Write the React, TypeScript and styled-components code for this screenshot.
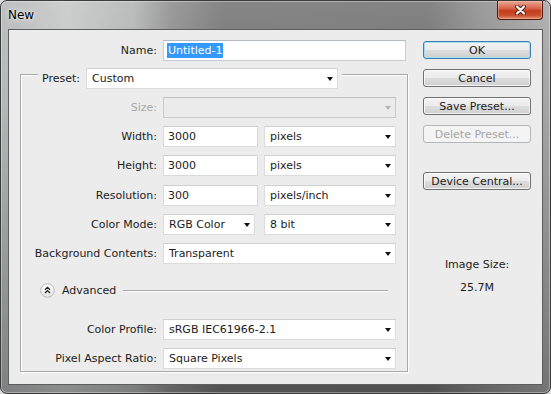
import React from "react";
import styled, { createGlobalStyle, css } from "styled-components";

const GlobalStyle = createGlobalStyle`
  html, body {
    margin: 0;
    padding: 0;
    background: #dcdcdc;
  }
  body {
    font-family: "DejaVu Sans", Tahoma, sans-serif;
    font-size: 11px;
    color: #1c1c1c;
  }
`;

const panelBg = "#ececec";

const Window = styled.div`
  box-sizing: border-box;
  width: 551px;
  height: 394px;
  display: flex;
  flex-direction: column;
  padding: 0 7px 8px;
  border: 1px solid #3a3a3a;
  border-radius: 7px;
  background:
    linear-gradient(180deg, rgba(255, 255, 255, 0.12) 0%, rgba(0, 0, 0, 0) 25%, rgba(0, 0, 0, 0.3) 100%),
    linear-gradient(90deg, #b4b7b8 0%, #c6c7c7 12%, #b3b4b4 24%, #8e8e8e 31%, #767676 40%, #737373 78%, #8b8b8b 86%, #a8a8a8 100%);
  box-shadow: inset 0 0 0 1px rgba(255, 255, 255, 0.35);
`;

const TitleBar = styled.div`
  height: 28px;
  flex: none;
  display: flex;
  justify-content: space-between;
  align-items: flex-start;
`;

const Title = styled.div`
  padding-top: 6px;
  font-size: 12px;
  line-height: 16px;
  color: #000;
  text-shadow: 0 0 6px rgba(255, 255, 255, 0.9), 0 0 2px rgba(255, 255, 255, 0.8);
`;

const CloseButton = styled.div`
  box-sizing: border-box;
  width: 46px;
  height: 19px;
  display: flex;
  align-items: center;
  justify-content: center;
  border: 1px solid #4a1c10;
  border-top: none;
  border-radius: 0 0 4px 4px;
  background: linear-gradient(180deg, #e9a997 0%, #d9664b 40%, #c43b1c 55%, #c9502f 80%, #e08f70 100%);
  box-shadow: inset 0 0 0 1px rgba(255, 200, 180, 0.45);
`;

const Client = styled.div`
  flex: 1;
  display: flex;
  border: 1px solid #5e5e5e;
  background: ${panelBg};
`;

const LeftColumn = styled.div`
  width: 398px;
  display: flex;
  flex-direction: column;
  padding-top: 10px;
`;

const RightColumn = styled.div`
  width: 108px;
  margin-left: 16px;
  display: flex;
  flex-direction: column;
  gap: 10px;
  padding-top: 11px;
`;

const Row = styled.div`
  display: flex;
  align-items: center;
  gap: 6px;
  height: 21px;
`;

const Label = styled.div<{ $width: number; $disabled?: boolean }>`
  flex: none;
  width: ${(p) => p.$width}px;
  text-align: right;
  white-space: nowrap;
  color: ${(p) => (p.$disabled ? "#a8a8a8" : "#1c1c1c")};
`;

const TextBox = styled.div<{ $width: number; $focused?: boolean }>`
  box-sizing: border-box;
  width: ${(p) => p.$width}px;
  height: 21px;
  display: flex;
  align-items: center;
  padding-left: ${(p) => (p.$focused ? 3 : 4)}px;
  background: #fff;
  border: 1px solid ${(p) => (p.$focused ? "#c5ccd4" : "#dadada")};
  border-top-color: ${(p) => (p.$focused ? "#b2bcc7" : "#cecece")};
  white-space: nowrap;
`;

const Selection = styled.span`
  background: #3399ff;
  color: #fff;
  padding: 1px 1px;
`;

const SelectBox = styled.div<{ $width: number; $disabled?: boolean; $offset?: number }>`
  position: relative;
  box-sizing: border-box;
  width: ${(p) => p.$width}px;
  height: 21px;
  margin-left: ${(p) => p.$offset ?? 0}px;
  display: flex;
  align-items: center;
  padding-left: 5px;
  background: ${(p) => (p.$disabled ? "#ebebeb" : "#fff")};
  border: 1px solid ${(p) => (p.$disabled ? "#cacaca" : "#dcdcdc")};
  border-top-color: ${(p) => (p.$disabled ? "#c0c0c0" : "#d0d0d0")};
  white-space: nowrap;

  &::after {
    content: "";
    position: absolute;
    right: 4px;
    top: 8px;
    border-left: 3.5px solid transparent;
    border-right: 3.5px solid transparent;
    border-top: 4px solid ${(p) => (p.$disabled ? "#b5b5b5" : "#111")};
  }
`;

const Group = styled.div`
  box-sizing: border-box;
  width: 388px;
  margin: 13px 0 0 11px;
  display: flex;
  flex-direction: column;
  border: 1px solid #a9a9a9;
  box-shadow: inset 1px 1px 0 #fff, 1px 1px 0 #fff;
  padding-bottom: 2px;
`;

const GroupHeader = styled.div`
  align-self: flex-start;
  display: flex;
  align-items: center;
  gap: 6px;
  height: 22px;
  margin: -8px 0 0 17px;
  padding: 0 4px;
  background: ${panelBg};
`;

const Stack = styled.div<{ $gap: number; $top: number }>`
  display: flex;
  flex-direction: column;
  gap: ${(p) => p.$gap}px;
  margin-top: ${(p) => p.$top}px;
`;

const AdvancedRow = styled.div`
  display: flex;
  align-items: center;
  height: 16px;
  margin: 19px 19px 0 19px;
  gap: 7px;
`;

const Separator = styled.div`
  flex: 1;
  border-top: 1px solid #a9a9a9;
  border-bottom: 1px solid #fff;
`;

const Button = styled.div<{ $variant?: "default" | "disabled"; $top?: number }>`
  box-sizing: border-box;
  height: 18px;
  display: flex;
  align-items: center;
  justify-content: center;
  margin-top: ${(p) => p.$top ?? 0}px;
  border: 1px solid #707070;
  border-radius: 3px;
  background: linear-gradient(180deg, #f3f3f3 0%, #ebebeb 48%, #dddddd 52%, #d0d0d0 100%);
  box-shadow: inset 0 0 0 1px rgba(255, 255, 255, 0.75);
  color: #1c1c1c;
  white-space: nowrap;

  ${(p) =>
    p.$variant === "default" &&
    css`
      border-color: #3c7fb1;
      box-shadow: inset 0 0 0 1px #a5dcf6;
    `}

  ${(p) =>
    p.$variant === "disabled" &&
    css`
      border-color: #b3b6b8;
      background: #f4f4f4;
      box-shadow: none;
      color: #a6a6a6;
    `}
`;

const SizeInfo = styled.div`
  margin-top: 58px;
  display: flex;
  flex-direction: column;
  align-items: center;
  gap: 10px;
  line-height: 13px;
`;

const CloseGlyph = () => (
  <svg width="11" height="10" viewBox="0 0 11 10">
    <path d="M2 1.5 L9 8.5 M9 1.5 L2 8.5" stroke="#5a1e10" strokeWidth="4" strokeLinecap="round" />
    <path d="M2 1.5 L9 8.5 M9 1.5 L2 8.5" stroke="#fff" strokeWidth="2.2" strokeLinecap="round" />
  </svg>
);

const CollapseIcon = () => (
  <svg width="15" height="15" viewBox="0 0 15 15">
    <defs>
      <linearGradient id="adv" x1="0" y1="0" x2="0" y2="1">
        <stop offset="0" stopColor="#ffffff" />
        <stop offset="1" stopColor="#e2e2e2" />
      </linearGradient>
    </defs>
    <circle cx="7.5" cy="7.5" r="6.8" fill="url(#adv)" stroke="#b9b9b9" />
    <path d="M5 6.8 L7.5 4.4 L10 6.8 M5 10 L7.5 7.6 L10 10" fill="none" stroke="#222" strokeWidth="1.3" />
  </svg>
);

const fieldRows = [
  { label: "Width:", value: "3000", unit: "pixels" },
  { label: "Height:", value: "3000", unit: "pixels" },
  { label: "Resolution:", value: "300", unit: "pixels/inch" },
];

const App = () => {
  return (
    <>
      <GlobalStyle />
      <Window>
        <TitleBar>
          <Title>New</Title>
          <CloseButton>
            <CloseGlyph />
          </CloseButton>
        </TitleBar>
        <Client>
          <LeftColumn>
            <Row>
              <Label $width={148}>Name:</Label>
              <TextBox $width={243} $focused>
                <Selection>Untitled-1</Selection>
              </TextBox>
            </Row>

            <Group>
              <GroupHeader>
                <Label $width={38}>Preset:</Label>
                <SelectBox $width={252}>Custom</SelectBox>
              </GroupHeader>

              <Stack $gap={8.2} $top={8}>
                <Row>
                  <Label $width={136} $disabled>
                    Size:
                  </Label>
                  <SelectBox $width={233} $disabled />
                </Row>
                {fieldRows.map((r) => (
                  <Row key={r.label}>
                    <Label $width={136}>{r.label}</Label>
                    <TextBox $width={95}>{r.value}</TextBox>
                    <SelectBox $width={132}>{r.unit}</SelectBox>
                  </Row>
                ))}
                <Row>
                  <Label $width={136}>Color Mode:</Label>
                  <SelectBox $width={92}>RGB Color</SelectBox>
                  <SelectBox $width={132} $offset={3}>
                    8 bit
                  </SelectBox>
                </Row>
                <Row>
                  <Label $width={136}>Background Contents:</Label>
                  <SelectBox $width={233}>Transparent</SelectBox>
                </Row>
              </Stack>

              <AdvancedRow>
                <CollapseIcon />
                <span>Advanced</span>
                <Separator />
              </AdvancedRow>

              <Stack $gap={8} $top={20}>
                <Row>
                  <Label $width={136}>Color Profile:</Label>
                  <SelectBox $width={233}>sRGB IEC61966-2.1</SelectBox>
                </Row>
                <Row>
                  <Label $width={136}>Pixel Aspect Ratio:</Label>
                  <SelectBox $width={233}>Square Pixels</SelectBox>
                </Row>
              </Stack>
            </Group>
          </LeftColumn>

          <RightColumn>
            <Button $variant="default">OK</Button>
            <Button>Cancel</Button>
            <Button>Save Preset...</Button>
            <Button $variant="disabled">Delete Preset...</Button>
            <Button $top={19}>Device Central...</Button>
            <SizeInfo>
              <span>Image Size:</span>
              <span>25.7M</span>
            </SizeInfo>
          </RightColumn>
        </Client>
      </Window>
    </>
  );
};

export default App;
